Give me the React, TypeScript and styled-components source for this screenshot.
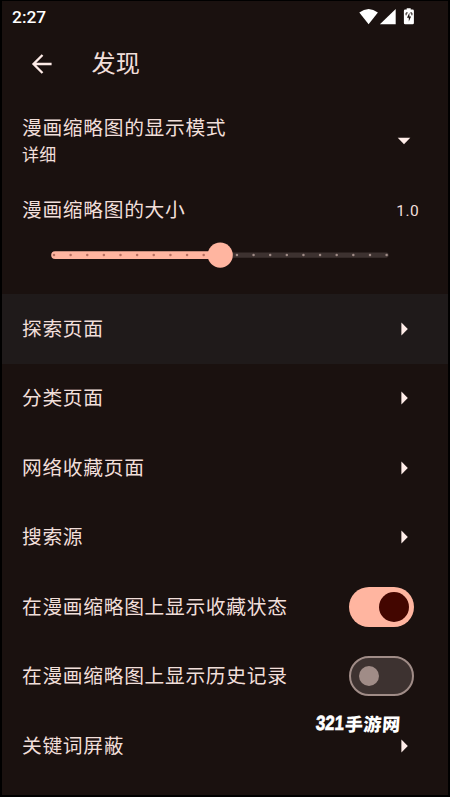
import React from "react";
import styled, { createGlobalStyle } from "styled-components";

const GlobalStyle = createGlobalStyle`
  * { box-sizing: border-box; }
  body { margin: 0; background: #000; }
`;

const Screen = styled.main`
  position: relative;
  width: 450px;
  height: 797px;
  overflow: hidden;
  display: flex;
  flex-direction: column;
  background: #1a110f;
  border: solid #000;
  border-width: 1px 2px 2px 2px;
  color: #f1dfda;
  font-family: Roboto, "Noto Sans CJK SC", sans-serif;
`;

const StatusBar = styled.header`
  height: 31px;
  flex: none;
  display: flex;
  align-items: center;
  justify-content: space-between;
  padding: 0 33px 0 10px;
  color: #fff;
`;

const Clock = styled.span`
  font: 500 17.4px/20px Roboto, sans-serif;
`;

const AppBar = styled.div`
  height: 63px;
  flex: none;
  display: flex;
  align-items: center;
  gap: 38.5px;
  padding: 1px 0 0 29px;
`;

const Title = styled.h1`
  margin: 0;
  font-size: 24.2px;
  font-weight: 400;
  line-height: 32px;
`;

const ModeRow = styled.div`
  height: 83px;
  flex: none;
  display: flex;
  align-items: center;
  justify-content: space-between;
  padding: 9px 37.5px 0 20px;
`;

const Label = styled.div`
  font-size: 19.75px;
  line-height: 28px;
  letter-spacing: 0.68px;
  white-space: nowrap;
`;

const Detail = styled.div`
  font-size: 17px;
  line-height: 25px;
  letter-spacing: 0.2px;
`;

const SizeRow = styled.div`
  height: 66px;
  flex: none;
  display: flex;
  align-items: center;
  justify-content: space-between;
  padding: 0 29px 0 20px;
`;

const Value = styled.span`
  font-size: 15.5px;
  line-height: 20px;
  letter-spacing: 0.4px;
  padding-bottom: 1px;
`;

const SliderRow = styled.div`
  height: 50px;
  flex: none;
  display: flex;
  align-items: flex-start;
  padding-left: 47px;
`;

const Track = styled.svg`
  display: block;
  margin-top: -3.5px;
`;

const Row = styled.div<{ $active?: boolean; $switch?: boolean }>`
  height: 69.5px;
  flex: none;
  display: flex;
  align-items: center;
  justify-content: space-between;
  padding: 0 ${(p) => (p.$switch ? 34 : 40)}px 0 20px;
  background: ${(p) => (p.$active ? "#1f1a1a" : "transparent")};

  ${Label} {
    padding-top: 2px;
  }
`;

const Switch = styled.span<{ $on: boolean }>`
  width: 65px;
  height: 40px;
  display: flex;
  align-items: center;
  justify-content: ${(p) => (p.$on ? "flex-end" : "flex-start")};
  padding: ${(p) => (p.$on ? "0 5px" : "0 7.5px")};
  border-radius: 20px;
  border: ${(p) => (p.$on ? "0" : "2.5px solid #a08c87")};
  background: ${(p) => (p.$on ? "#ffb5a0" : "#3d3230")};
`;

const Thumb = styled.span<{ $on: boolean }>`
  width: ${(p) => (p.$on ? 30 : 20)}px;
  height: ${(p) => (p.$on ? 30 : 20)}px;
  border-radius: 50%;
  background: ${(p) => (p.$on ? "#430600" : "#a08c87")};
`;

const Watermark = styled.div`
  position: absolute;
  left: 314px;
  top: 709px;
  display: flex;
  align-items: center;
  color: #fff;
  font: 900 18px/26px "Noto Sans CJK SC", sans-serif;
  letter-spacing: 0.6px;
  transform: skewX(-4deg);
`;

const Digits = styled.span`
  font: 700 20.5px/26px "Liberation Sans", sans-serif;
  -webkit-text-stroke: 0.7px #fff;
  letter-spacing: 0;
  width: 29px;
  transform: scaleX(0.82);
  transform-origin: left;
`;

const BackIcon = () => (
  <svg width="22" height="22" viewBox="0 0 22 22" fill="none" stroke="#fdebe7" strokeWidth="2.3">
    <path d="M20.6 11H3M11.5 2 2.5 11l9 9" />
  </svg>
);

const StatusIcons = () => (
  <svg width="56" height="18" viewBox="0 0 56 18" fill="#fff">
    <path d="M.3 4.6Q9.6-2.4 18.9 4.6L9.6 16.2Z" />
    <path d="M36.7 1V16.2H20.9Z" />
    <g transform="translate(.9 .3)">
      <path d="M46.8 0h4v1.3h1.9q1.3 0 1.3 1.3v12q0 1.3-1.3 1.3h-7.4q-1.3 0-1.3-1.3v-12q0-1.3 1.3-1.3h1.5z" />
      <path d="M49.5 4.5v3.8h1.7l-2.3 4.8V9.4h-1.8z" fill="#1a110f" />
      <path d="M46.2 7V4.6h1.6M52 7V4.6h-1.6" stroke="#1a110f" strokeWidth="1" fill="none" />
    </g>
  </svg>
);

const Caret = ({ down = false }: { down?: boolean }) =>
  down ? (
    <svg width="14" height="8" viewBox="0 0 14 8"><path d="M.7.7h12.6L7 7.2z" fill="#ffede9" /></svg>
  ) : (
    <svg width="7" height="14" viewBox="0 0 7 14"><path d="M.4.6v12.8L6.8 7z" fill="#ffede9" /></svg>
  );

const Slider = () => (
  <Track width="345" height="28" viewBox="49 240.5 345 28">
    <rect x="210" y="252" width="178.7" height="5.2" rx="2.4" fill="#3d3230" />
    <rect x="51.2" y="250.7" width="175" height="7.8" rx="3.9" fill="#ffb5a0" />
    {Array.from({ length: 21 }, (_, i) => (
      <circle key={i} cx={54 + i * 16.63} cy="254.6" r="1.25" fill={i < 10 ? "#b56f60" : "#a08c87"} />
    ))}
    <circle cx="220.2" cy="254.6" r="12.6" fill="#ffb5a0" />
  </Track>
);

type Item = { label: string; active?: boolean; on?: boolean };

const items: Item[] = [
  { label: "探索页面", active: true },
  { label: "分类页面" },
  { label: "网络收藏页面" },
  { label: "搜索源" },
  { label: "在漫画缩略图上显示收藏状态", on: true },
  { label: "在漫画缩略图上显示历史记录", on: false },
  { label: "关键词屏蔽" },
];

export default function App() {
  return (
    <>
      <GlobalStyle />
      <Screen>
        <StatusBar>
          <Clock>2:27</Clock>
          <StatusIcons />
        </StatusBar>
        <AppBar>
          <BackIcon />
          <Title>发现</Title>
        </AppBar>
        <ModeRow>
          <div>
            <Label>漫画缩略图的显示模式</Label>
            <Detail>详细</Detail>
          </div>
          <Caret down />
        </ModeRow>
        <SizeRow>
          <Label>漫画缩略图的大小</Label>
          <Value>1.0</Value>
        </SizeRow>
        <SliderRow>
          <Slider />
        </SliderRow>
        {items.map(({ label, active, on }) => (
          <Row key={label} $active={active} $switch={on !== undefined}>
            <Label>{label}</Label>
            {on === undefined ? <Caret /> : <Switch $on={on}><Thumb $on={on} /></Switch>}
          </Row>
        ))}
        <Watermark>
          <Digits>321</Digits>手游网
        </Watermark>
      </Screen>
    </>
  );
}
